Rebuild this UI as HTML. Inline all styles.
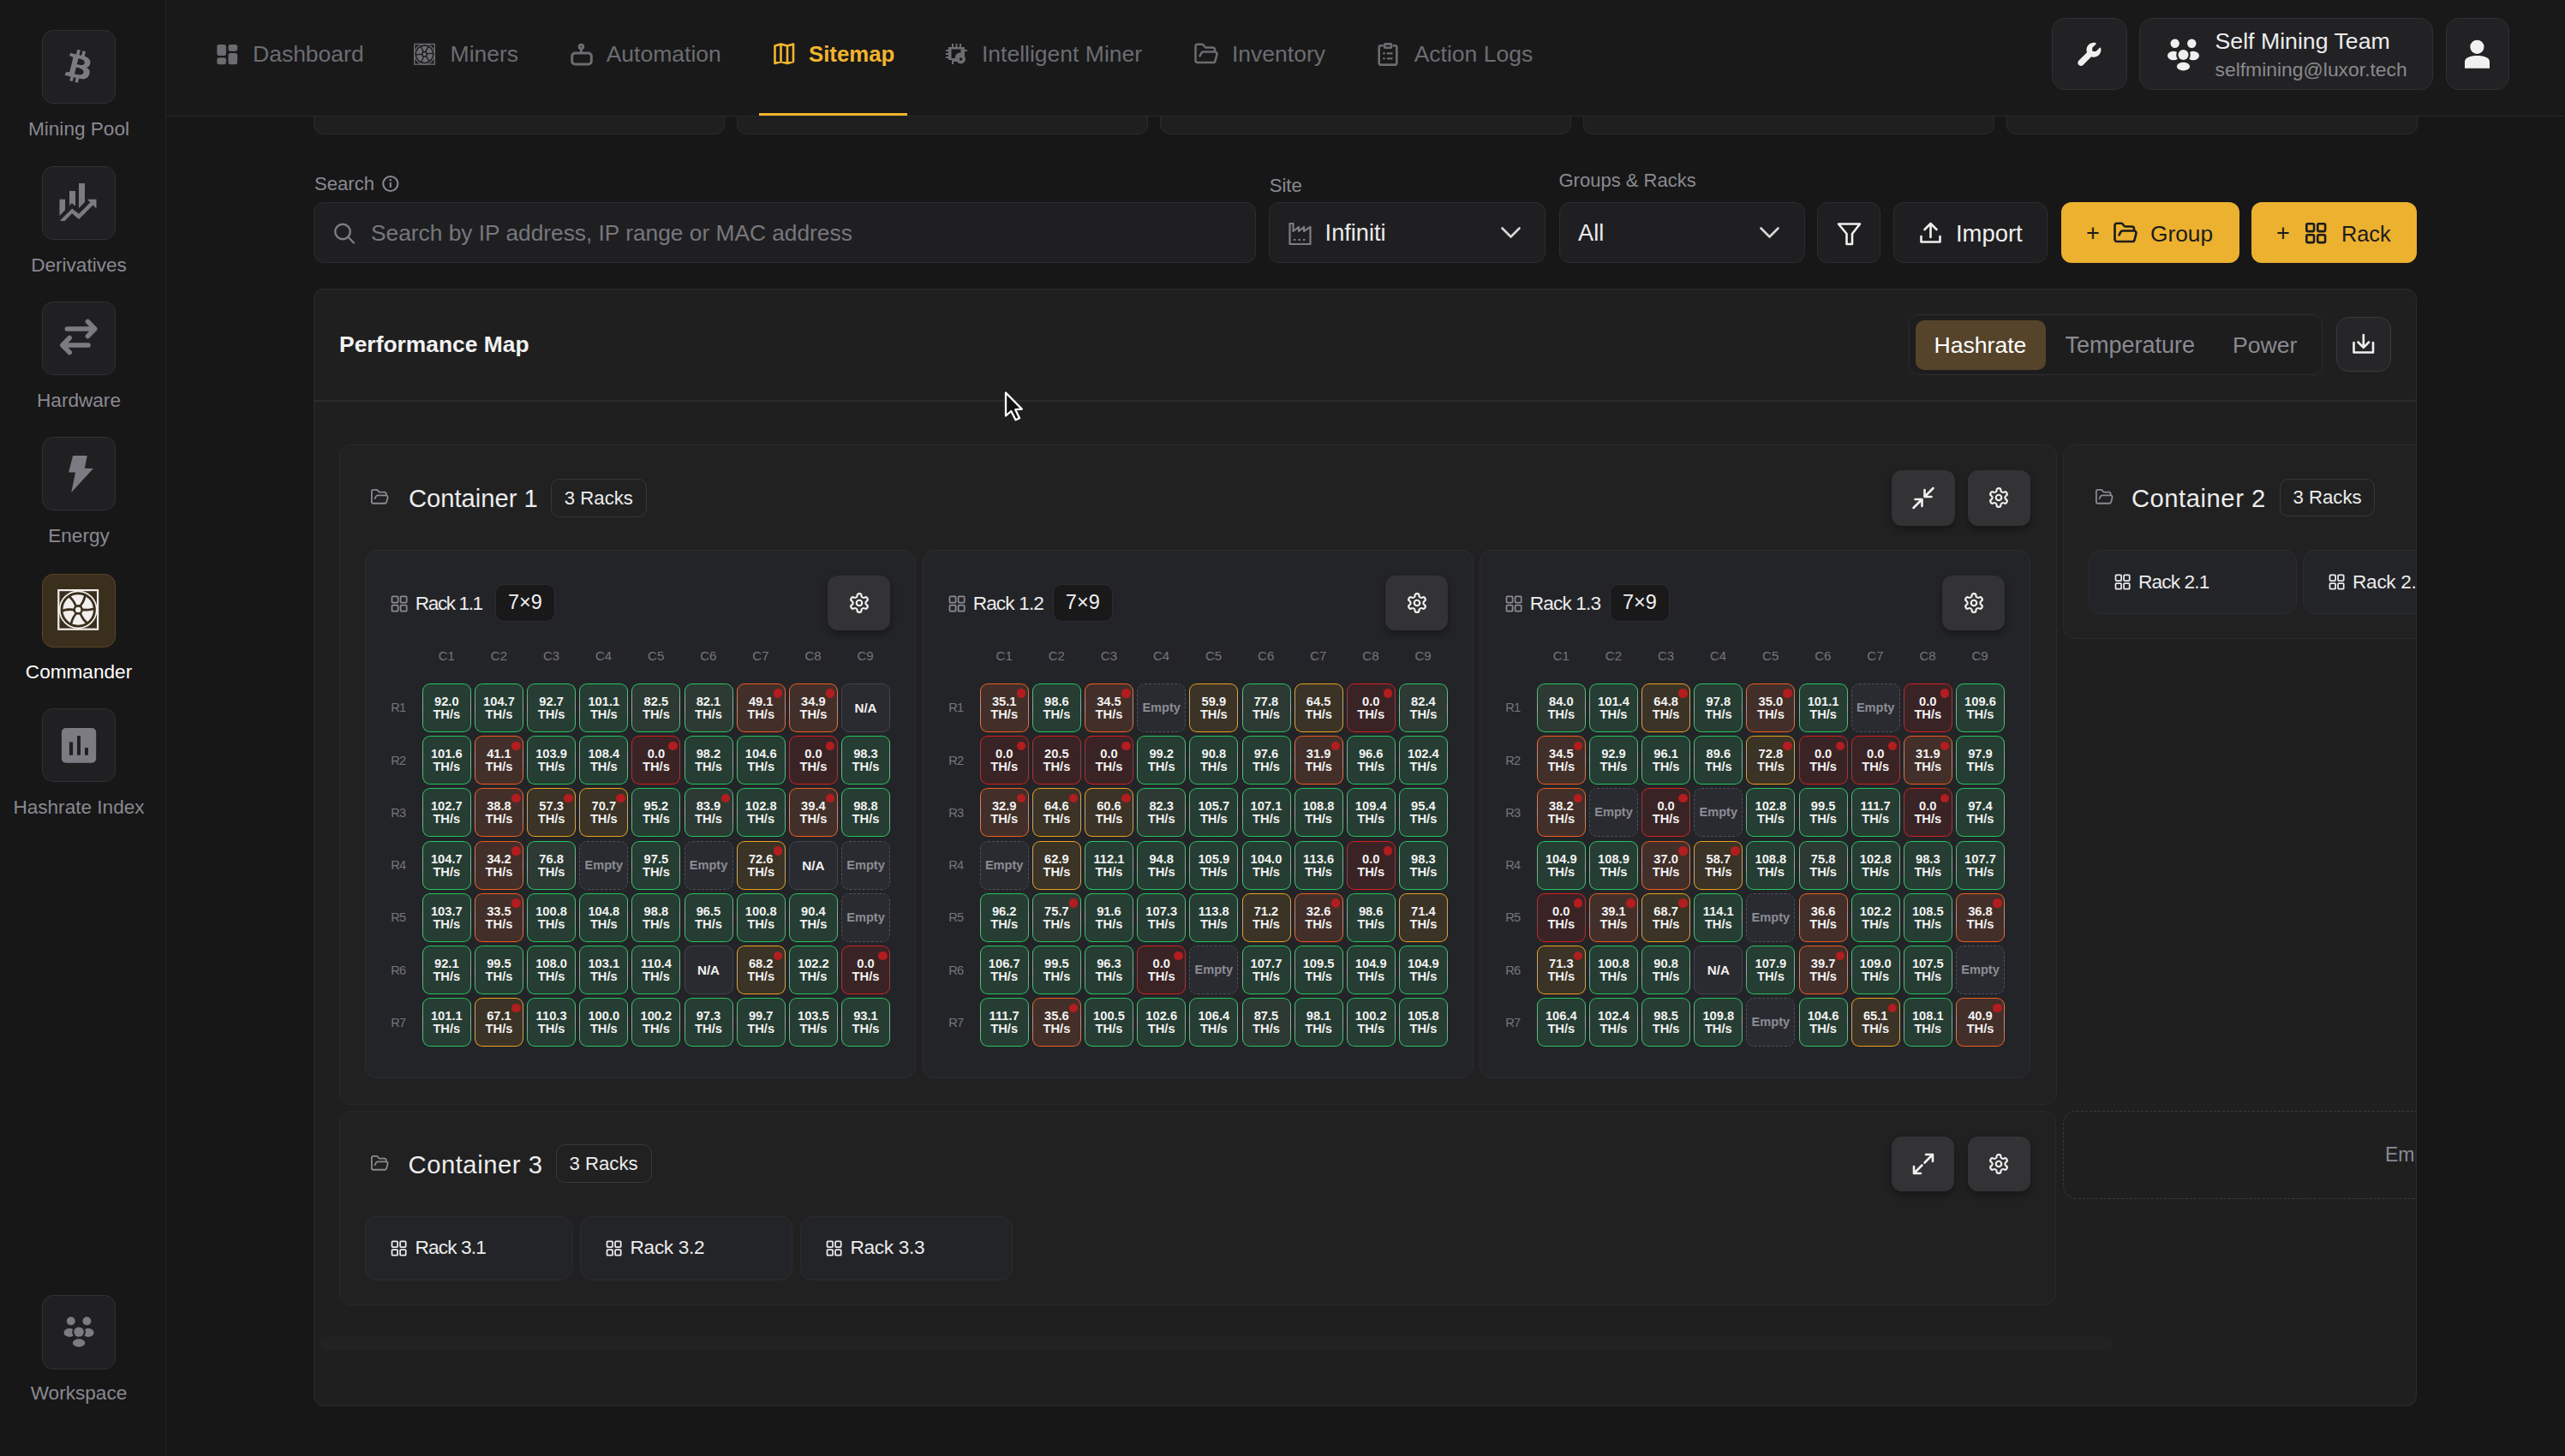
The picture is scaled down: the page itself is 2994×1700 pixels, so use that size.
<!DOCTYPE html><html><head><meta charset="utf-8"><style>
*{margin:0;padding:0;box-sizing:border-box}
html,body{width:2994px;height:1700px;overflow:hidden;background:#171718;font-family:"Liberation Sans",sans-serif}
.t{position:absolute;white-space:nowrap}
.b{position:absolute}
.cell{position:absolute;width:57px;height:57px;border-radius:9px;padding-top:1.5px;display:flex;flex-direction:column;align-items:center;justify-content:center;font-weight:700;font-size:14.7px;line-height:15px;color:#f2f2f2;text-align:center}
.cell .d{position:absolute;right:2.5px;top:5.5px;width:10.5px;height:10.5px;border-radius:50%;background:#b31d1f}
.g{background:linear-gradient(#263d33,#263d33) padding-box,linear-gradient(180deg,#22c55e 0%,#9aa89f 50%,#22c55e 100%) border-box;border:1.5px solid transparent}
.g2{background:linear-gradient(#2c3a33,#2c3a33) padding-box,linear-gradient(180deg,#22c55e 0%,#a8aea9 50%,#22c55e 100%) border-box;border:1.5px solid transparent}
.o{background:linear-gradient(#432f29,#432f29) padding-box,linear-gradient(180deg,#f25a1c 0%,#b89588 50%,#f25a1c 100%) border-box;border:1.5px solid transparent}
.r{background:linear-gradient(#3a2325,#3a2325) padding-box,linear-gradient(180deg,#d61f1f 0%,#7a4a4a 50%,#d61f1f 100%) border-box;border:1.5px solid transparent}
.y{background:linear-gradient(#3b3326,#3b3326) padding-box,linear-gradient(180deg,#eca21a 0%,#b8a686 50%,#eca21a 100%) border-box;border:1.5px solid transparent}
.na{background:#2a2b30;border:1.5px solid #43444d}
.em{background:#2a2b30;border:1.5px dashed #50515a;color:#8b8c95 !important}
</style></head><body>

<div class="b" style="left:193.0px;top:0.0px;width:1.0px;height:1700.0px;background:#232325;border-radius:0px;"></div>
<div class="b" style="left:49.0px;top:35.0px;width:86.0px;height:86.0px;background:#202022;border:1.5px solid #313134;border-radius:13px;"></div>
<div class="t" style="left:-108.0px;width:400px;text-align:center;top:139.9px;font-size:22.6px;line-height:22.6px;color:#8a8990;font-weight:400;letter-spacing:0px">Mining Pool</div>
<div class="b" style="left:49.0px;top:194.3px;width:86.0px;height:86.0px;background:#202022;border:1.5px solid #313134;border-radius:13px;"></div>
<div class="t" style="left:-108.0px;width:400px;text-align:center;top:299.2px;font-size:22.6px;line-height:22.6px;color:#8a8990;font-weight:400;letter-spacing:0px">Derivatives</div>
<div class="b" style="left:49.0px;top:352.3px;width:86.0px;height:86.0px;background:#202022;border:1.5px solid #313134;border-radius:13px;"></div>
<div class="t" style="left:-108.0px;width:400px;text-align:center;top:457.2px;font-size:22.6px;line-height:22.6px;color:#8a8990;font-weight:400;letter-spacing:0px">Hardware</div>
<div class="b" style="left:49.0px;top:510.3px;width:86.0px;height:86.0px;background:#202022;border:1.5px solid #313134;border-radius:13px;"></div>
<div class="t" style="left:-108.0px;width:400px;text-align:center;top:615.2px;font-size:22.6px;line-height:22.6px;color:#8a8990;font-weight:400;letter-spacing:0px">Energy</div>
<div class="b" style="left:49.0px;top:669.5px;width:86.0px;height:86.0px;background:#3a2f1d;border:1.5px solid #5a4622;border-radius:13px;"></div>
<div class="t" style="left:-108.0px;width:400px;text-align:center;top:774.4px;font-size:22.6px;line-height:22.6px;color:#ffffff;font-weight:400;letter-spacing:0px">Commander</div>
<div class="b" style="left:49.0px;top:827.4px;width:86.0px;height:86.0px;background:#202022;border:1.5px solid #313134;border-radius:13px;"></div>
<div class="t" style="left:-108.0px;width:400px;text-align:center;top:932.3px;font-size:22.6px;line-height:22.6px;color:#8a8990;font-weight:400;letter-spacing:0px">Hashrate Index</div>
<div class="b" style="left:49.0px;top:1512.0px;width:86.0px;height:87.0px;background:#202022;border:1.5px solid #313134;border-radius:13px;"></div>
<div class="t" style="left:-108.0px;width:400px;text-align:center;top:1615.9px;font-size:22.6px;line-height:22.6px;color:#8a8990;font-weight:400;letter-spacing:0px">Workspace</div>
<svg class="b" style="left:66.0px;top:52.0px;" width="52.0" height="52.0" viewBox="66 52 52 52"><g transform="translate(92.3,77.6) rotate(14) scale(0.0735) translate(-192,-256)" fill="#7c7b82"><path d="M310.204 242.638c27.73-14.18 45.377-39.39 41.28-81.3-5.358-57.351-52.458-76.573-114.85-81.929V0h-48.528v77.203c-12.605 0-25.525.315-38.444.63V0h-48.528v79.409c-17.842.539-38.622.276-97.37 0v51.678c38.314-.678 58.417-3.14 63.023 21.427v217.429c-2.925 19.492-18.524 16.685-53.255 16.071L3.765 443.68c88.481 0 97.37.315 97.37.315V512h48.528v-67.06c13.234.315 26.154.315 38.444.315V512h48.528v-68.005c81.299-4.412 135.647-24.894 142.895-101.489 5.671-61.446-23.32-88.862-69.326-99.868zM150.608 134.553c27.415 0 113.126-8.507 113.126 48.528 0 54.515-85.71 48.212-113.126 48.212v-96.74zm0 251.776V279.821c32.772 0 133.127-9.138 133.127 53.255-.001 60.186-100.355 53.253-133.127 53.253z"/></g></svg>
<svg class="b" style="left:66.0px;top:208.0px;" width="50.0" height="54.0" viewBox="66 208 50 54"><rect x="69.5" y="232.7" width="6.5" height="26" fill="#7c7b82"/>
<rect x="81" y="223" width="7" height="24" fill="#7c7b82"/>
<rect x="92" y="214" width="7" height="36" fill="#7c7b82"/>
<polyline points="62,263.5 84.1,240.9 92,247.1 110,229.1" fill="none" stroke="#202022" stroke-width="5.6"/>
<rect x="66" y="257.8" width="20" height="5" fill="#202022"/>
<polygon points="69.8,257.8 84.1,243.5 92,249.7 105.4,236.3 101.75,232.7 112.5,232.7 112.5,243.5 108.5,239.4 92,255.9 84.1,249.2 75.7,257.8" fill="#7c7b82"/></svg>
<svg class="b" style="left:64.0px;top:366.0px;" width="56.0" height="54.0" viewBox="64 366 56 54"><g fill="none" stroke="#7c7b82" stroke-width="5.5" stroke-linecap="round" stroke-linejoin="round">
<path d="M78.3,384 H110.5 M102.4,375.5 L110.8,384 L102.4,392.5"/>
<path d="M103,403 H73 M81.2,394.5 L72.8,403 L81.2,411.5"/></g></svg>
<svg class="b" style="left:76.0px;top:528.0px;" width="38.0" height="52.0" viewBox="76 528 38 52"><polygon points="85.1,532 101.75,532 98.8,546.7 108.9,547 83.2,575.1 88,551.6 80.2,551.6" fill="#7c7b82"/></svg>
<svg class="b" style="left:65.0px;top:686.0px;" width="53.0" height="52.0" viewBox="65 686 53 52"><rect x="67.2" y="688" width="48" height="47.8" fill="#f2efec"/>
<rect x="69.4" y="690.2" width="43.6" height="43.4" fill="#3a2f1d"/>
<circle cx="91.2" cy="711.9" r="22.4" fill="#f2efec"/>
<circle cx="91.2" cy="711.9" r="19.2" fill="#f2efec" stroke="#3a2f1d" stroke-width="2.9"/>
<path transform="rotate(0 91.2 711.9)" d="M91.2,711.9 C89.5,705 86.5,699 80.5,694.5 L78.6,696.5 C84,700.5 87.3,706 88.6,712.6 Z" fill="#3a2f1d"/><path transform="rotate(60 91.2 711.9)" d="M91.2,711.9 C89.5,705 86.5,699 80.5,694.5 L78.6,696.5 C84,700.5 87.3,706 88.6,712.6 Z" fill="#3a2f1d"/><path transform="rotate(120 91.2 711.9)" d="M91.2,711.9 C89.5,705 86.5,699 80.5,694.5 L78.6,696.5 C84,700.5 87.3,706 88.6,712.6 Z" fill="#3a2f1d"/><path transform="rotate(180 91.2 711.9)" d="M91.2,711.9 C89.5,705 86.5,699 80.5,694.5 L78.6,696.5 C84,700.5 87.3,706 88.6,712.6 Z" fill="#3a2f1d"/><path transform="rotate(240 91.2 711.9)" d="M91.2,711.9 C89.5,705 86.5,699 80.5,694.5 L78.6,696.5 C84,700.5 87.3,706 88.6,712.6 Z" fill="#3a2f1d"/><path transform="rotate(300 91.2 711.9)" d="M91.2,711.9 C89.5,705 86.5,699 80.5,694.5 L78.6,696.5 C84,700.5 87.3,706 88.6,712.6 Z" fill="#3a2f1d"/>
<circle cx="91.2" cy="711.9" r="5.8" fill="#3a2f1d"/><circle cx="91.2" cy="711.9" r="3.2" fill="#f2efec"/></svg>
<svg class="b" style="left:70.0px;top:848.0px;" width="45.0" height="46.0" viewBox="70 848 45 46"><rect x="71.9" y="850" width="40.3" height="40.8" rx="5" fill="#7c7b82"/>
<rect x="80.9" y="866.4" width="4.2" height="15.3" fill="#202022"/>
<rect x="90" y="859" width="4" height="22.7" fill="#202022"/>
<rect x="99" y="873" width="4" height="8.7" fill="#202022"/></svg>
<svg class="b" style="left:70.0px;top:1532.0px;" width="46.0" height="46.0" viewBox="0 0 46 46"><g transform="translate(4.5,5) scale(0.95)">
<circle cx="8.7" cy="5.7" r="5.2" fill="#7c7b82"/><circle cx="28.3" cy="5.7" r="5.2" fill="#7c7b82"/>
<ellipse cx="7" cy="20" rx="7" ry="5.2" fill="#7c7b82"/><ellipse cx="30" cy="20" rx="7" ry="5.2" fill="#7c7b82"/>
<circle cx="18.5" cy="19.1" r="8.3" fill="#202022"/>
<circle cx="18.5" cy="19.1" r="6" fill="#7c7b82"/>
<ellipse cx="18.5" cy="32.6" rx="7.6" ry="4.9" fill="#7c7b82"/>
</g></svg>
<div class="b" style="left:366.0px;top:60.0px;width:479.5px;height:96.5px;background:#1f1f20;border:1.5px solid #2b2b2d;border-radius:11px;"></div>
<div class="b" style="left:860.0px;top:60.0px;width:479.5px;height:96.5px;background:#1f1f20;border:1.5px solid #2b2b2d;border-radius:11px;"></div>
<div class="b" style="left:1354.0px;top:60.0px;width:479.5px;height:96.5px;background:#1f1f20;border:1.5px solid #2b2b2d;border-radius:11px;"></div>
<div class="b" style="left:1848.0px;top:60.0px;width:479.5px;height:96.5px;background:#1f1f20;border:1.5px solid #2b2b2d;border-radius:11px;"></div>
<div class="b" style="left:2342.0px;top:60.0px;width:479.5px;height:96.5px;background:#1f1f20;border:1.5px solid #2b2b2d;border-radius:11px;"></div>
<div class="b" style="left:194.0px;top:0.0px;width:2800.0px;height:135.0px;background:#19191a;border-radius:0px;"></div>
<div class="b" style="left:194.0px;top:135.0px;width:2800.0px;height:1.0px;background:#29292b;border-radius:0px;"></div>
<div class="t" style="left:295.0px;top:50.3px;font-size:26.5px;line-height:26.5px;color:#6c6c71;font-weight:400;letter-spacing:0px;">Dashboard</div>
<div class="t" style="left:525.6px;top:50.3px;font-size:26.5px;line-height:26.5px;color:#6c6c71;font-weight:400;letter-spacing:0px;">Miners</div>
<div class="t" style="left:707.7px;top:50.3px;font-size:26.5px;line-height:26.5px;color:#6c6c71;font-weight:400;letter-spacing:0px;">Automation</div>
<div class="t" style="left:944.0px;top:50.7px;font-size:25.8px;line-height:25.8px;color:#f2b52e;font-weight:700;letter-spacing:0px;">Sitemap</div>
<div class="t" style="left:1146.0px;top:50.3px;font-size:26.5px;line-height:26.5px;color:#6c6c71;font-weight:400;letter-spacing:0px;">Intelligent Miner</div>
<div class="t" style="left:1438.0px;top:50.3px;font-size:26.5px;line-height:26.5px;color:#6c6c71;font-weight:400;letter-spacing:0px;">Inventory</div>
<div class="t" style="left:1650.7px;top:50.3px;font-size:26.5px;line-height:26.5px;color:#6c6c71;font-weight:400;letter-spacing:0px;">Action Logs</div>
<svg class="b" style="left:252.0px;top:51.0px;" width="28.0" height="26.0" viewBox="252 51 28 26"><g fill="#6c6c71"><rect x="253.3" y="51.9" width="10.6" height="13.2" rx="2.4"/><rect x="266.5" y="51.9" width="10.6" height="7.9" rx="2.4"/>
<rect x="253.3" y="67.2" width="10.6" height="8.1" rx="2.4"/><rect x="266.5" y="62.1" width="10.6" height="13.2" rx="2.4"/></g></svg>
<svg class="b" style="left:481.0px;top:49.0px;" width="30.0" height="29.0" viewBox="481 49 30 29"><rect x="483" y="50.8" width="25" height="25" fill="#6c6c71"/>
<rect x="484.4" y="52.2" width="22.2" height="22.2" fill="#19191a"/>
<circle cx="495.5" cy="63.3" r="12.3" fill="#6c6c71"/>
<circle cx="495.5" cy="63.3" r="10.3" fill="#6c6c71" stroke="#19191a" stroke-width="1.4"/>
<g fill="none" stroke="#19191a" stroke-width="1.3"><path d="M495.5,63.3 C494,60 492.5,57 491,53.5"/><path d="M495.5,63.3 C497,60 498,57 500.5,54"/><path d="M495.5,63.3 C499,62.5 502,62 505.5,62.5"/><path d="M495.5,63.3 C498,66 500,69 501,72"/><path d="M495.5,63.3 C494,67 493,70 491.5,73"/><path d="M495.5,63.3 C492,63.5 489,63.5 485.5,64"/></g>
<circle cx="495.5" cy="63.3" r="2.8" fill="#6c6c71" stroke="#19191a" stroke-width="1.3"/></svg>
<svg class="b" style="left:664.0px;top:49.0px;" width="30.0" height="29.0" viewBox="664 49 30 29"><g fill="none" stroke="#6c6c71" stroke-width="3"><rect x="667.7" y="62" width="22.6" height="13" rx="3.5"/><line x1="678.4" y1="57" x2="678.4" y2="62"/><circle cx="678.4" cy="54.5" r="2.3"/></g></svg>
<svg class="b" style="left:901.0px;top:49.0px;" width="30.0" height="29.0" viewBox="901 49 30 29"><path d="M904.5,53.5 L911.5,51.5 L919,53.5 L926,51.5 V72 L919,74 L911.5,72 L904.5,74 Z M911.5,51.5 V72 M919,53.5 V74" fill="none" stroke="#f2b52e" stroke-width="2.6" stroke-linejoin="round"/></svg>
<svg class="b" style="left:1102.0px;top:49.0px;" width="30.0" height="29.0" viewBox="1102 49 30 29"><g fill="#6c6c71">
<path fill-rule="evenodd" d="M1107,55 H1126 V66 H1123 V72 H1111 V70 H1107 Z M1110.5,57.5 V68 H1115 V67 C1115,63.5 1118,61 1121.5,61.5 V57.5 Z"/>
<rect x="1111" y="51" width="2" height="4"/><rect x="1115.5" y="51" width="2" height="4"/><rect x="1120" y="51" width="2" height="4"/>
<rect x="1104" y="58" width="3" height="2"/><rect x="1104" y="62" width="3" height="2"/><rect x="1104" y="66" width="3" height="2"/>
<rect x="1111" y="72" width="2" height="3"/><rect x="1126" y="58" width="3" height="2"/>
<circle cx="1121.6" cy="69" r="5.4"/>
</g><circle cx="1121.6" cy="69" r="1.8" fill="#19191a"/></svg>
<svg class="b" style="left:1393px;top:47.5px" width="30" height="30" viewBox="0 0 24 24"><path d="m6 14 1.5-2.9A2 2 0 0 1 9.24 10H20a2 2 0 0 1 1.94 2.5l-1.54 6a2 2 0 0 1-1.95 1.5H4a2 2 0 0 1-2-2V5a2 2 0 0 1 2-2h3.9a2 2 0 0 1 1.69.9l.81 1.2a2 2 0 0 0 1.67.9H18a2 2 0 0 1 2 2v2" fill="none" stroke="#6c6c71" stroke-width="2" stroke-linecap="round" stroke-linejoin="round"/></svg>
<svg class="b" style="left:1607.0px;top:49.0px;" width="28.0" height="30.0" viewBox="1607 49 28 30"><g fill="none" stroke="#6c6c71" stroke-width="2.6" stroke-linejoin="round"><path d="M1614.5,53.3 H1611.5 C1610.5,53.3 1609.7,54.1 1609.7,55.1 V73.8 C1609.7,74.8 1610.5,75.6 1611.5,75.6 H1628.5 C1629.5,75.6 1630.3,74.8 1630.3,73.8 V55.1 C1630.3,54.1 1629.5,53.3 1628.5,53.3 H1625.5"/><rect x="1616" y="51.4" width="8" height="4.3" rx="1"/></g>
<g fill="#6c6c71"><circle cx="1615.5" cy="62.3" r="1.3"/><circle cx="1615.5" cy="68.3" r="1.3"/><rect x="1618.7" y="61.2" width="7" height="2.2" rx="1"/><rect x="1618.7" y="67.2" width="7" height="2.2" rx="1"/></g></svg>
<div class="b" style="left:886.0px;top:132.0px;width:172.6px;height:3.0px;background:#f2b52e;border-radius:0px;"></div>
<div class="b" style="left:2395.0px;top:21.0px;width:88.0px;height:84.0px;background:#222224;border:1.5px solid #303033;border-radius:15px;"></div>
<div class="b" style="left:2497.0px;top:21.0px;width:343.0px;height:84.0px;background:#222224;border:1.5px solid #303033;border-radius:15px;"></div>
<div class="b" style="left:2855.0px;top:21.0px;width:74.0px;height:84.0px;background:#222224;border:1.5px solid #303033;border-radius:15px;"></div>
<svg class="b" style="left:2420.0px;top:46.0px;" width="36.0" height="36.0" viewBox="2420 46 36 36"><g transform="translate(2425.3,49.8) scale(0.053)" fill="#f0f0f0"><path d="M352 320c88.4 0 160-71.6 160-160c0-15.3-2.2-30.1-6.2-44.2c-3.1-10.8-16.4-13.2-24.3-5.3l-76.8 76.8c-3 3-7.1 4.7-11.3 4.7H336c-8.8 0-16-7.2-16-16V118.6c0-4.2 1.7-8.3 4.7-11.3l76.8-76.8c7.9-7.9 5.4-21.2-5.3-24.3C382.1 2.2 367.3 0 352 0C263.6 0 192 71.6 192 160c0 19.1 3.4 37.5 9.5 54.5L19.9 396.1C7.2 408.8 0 426.1 0 444.1C0 481.6 30.4 512 67.9 512c18 0 35.3-7.2 48-19.9L297.5 310.5c17 6.2 35.4 9.5 54.5 9.5z"/></g></svg>
<svg class="b" style="left:2528.0px;top:43.0px;" width="40.0" height="42.0" viewBox="0 0 40 42"><g transform="translate(2,2) scale(1.0)">
<circle cx="8.7" cy="5.7" r="5.2" fill="#f0f0f0"/><circle cx="28.3" cy="5.7" r="5.2" fill="#f0f0f0"/>
<ellipse cx="7" cy="20" rx="7" ry="5.2" fill="#f0f0f0"/><ellipse cx="30" cy="20" rx="7" ry="5.2" fill="#f0f0f0"/>
<circle cx="18.5" cy="19.1" r="8.3" fill="#222224"/>
<circle cx="18.5" cy="19.1" r="6" fill="#f0f0f0"/>
<ellipse cx="18.5" cy="32.6" rx="7.6" ry="4.9" fill="#f0f0f0"/>
</g></svg>
<div class="t" style="left:2585.5px;top:34.8px;font-size:26.7px;line-height:26.7px;color:#ececec;font-weight:400;letter-spacing:0px;">Self Mining Team</div>
<div class="t" style="left:2585.5px;top:70.3px;font-size:22.9px;line-height:22.9px;color:#8a8a8e;font-weight:400;letter-spacing:0px;">selfmining@luxor.tech</div>
<svg class="b" style="left:2874.0px;top:44.0px;" width="36.0" height="38.0" viewBox="2874 44 36 38"><circle cx="2891.4" cy="54.8" r="8.1" fill="#f0f0f0"/><path d="M2877,79.7 V72 C2877,67.8 2883,65.1 2891.5,65.1 C2900,65.1 2906,67.8 2906,72 V79.7 Z" fill="#f0f0f0"/></svg>
<div class="t" style="left:367.0px;top:204.3px;font-size:22.1px;line-height:22.1px;color:#8a8a90;font-weight:400;letter-spacing:0px;">Search</div>
<svg class="b" style="left:444.0px;top:203.0px;" width="24.0" height="24.0" viewBox="444 203 24 24"><circle cx="455.8" cy="214.5" r="8.6" fill="none" stroke="#8a8a90" stroke-width="2"/><rect x="454.8" y="213" width="2" height="6" fill="#8a8a90"/><circle cx="455.8" cy="210.2" r="1.2" fill="#8a8a90"/></svg>
<div class="b" style="left:366.0px;top:236.0px;width:1099.5px;height:71.0px;background:#1f1f21;border:1.5px solid #2d2d30;border-radius:12px;"></div>
<svg class="b" style="left:386.0px;top:257.0px;" width="32.0" height="32.0" viewBox="386 257 32 32"><circle cx="400" cy="270.5" r="8.8" fill="none" stroke="#7c7c82" stroke-width="2.4"/><line x1="406.5" y1="277" x2="413" y2="283.5" stroke="#7c7c82" stroke-width="2.4" stroke-linecap="round"/></svg>
<div class="t" style="left:433.0px;top:259.3px;font-size:26.3px;line-height:26.3px;color:#77777d;font-weight:400;letter-spacing:0px;">Search by IP address, IP range or MAC address</div>
<div class="t" style="left:1481.7px;top:206.3px;font-size:22.1px;line-height:22.1px;color:#8a8a90;font-weight:400;letter-spacing:0px;">Site</div>
<div class="b" style="left:1480.5px;top:236.0px;width:323.5px;height:71.0px;background:#1f1f21;border:1.5px solid #2d2d30;border-radius:12px;"></div>
<svg class="b" style="left:1502.0px;top:257.0px;" width="32.0" height="32.0" viewBox="1502 257 32 32"><path d="M1505.5,285 V261 H1509.5 V270 L1516,265 V270 L1522,265 V270 L1529.5,265 V285 Z" fill="none" stroke="#7c7c82" stroke-width="2.2" stroke-linejoin="round"/><g fill="#7c7c82"><rect x="1510" y="279" width="2.4" height="2"/><rect x="1515.5" y="279" width="2.4" height="2"/><rect x="1521" y="279" width="2.4" height="2"/></g></svg>
<div class="t" style="left:1546.6px;top:258.4px;font-size:27.2px;line-height:27.2px;color:#ebebeb;font-weight:400;letter-spacing:0px;">Infiniti</div>
<svg class="b" style="left:1750.0px;top:262.0px;" width="28.0" height="20.0" viewBox="1750 262 28 20"><polyline points="1753.5,266.5 1763.5,276.5 1773.5,266.5" fill="none" stroke="#d8d8d8" stroke-width="2.6" stroke-linecap="round" stroke-linejoin="round"/></svg>
<div class="t" style="left:1819.5px;top:199.8px;font-size:22px;line-height:22px;color:#8a8a90;font-weight:400;letter-spacing:0px;">Groups &amp; Racks</div>
<div class="b" style="left:1819.5px;top:236.0px;width:287.0px;height:71.0px;background:#1f1f21;border:1.5px solid #2d2d30;border-radius:12px;"></div>
<div class="t" style="left:1842.0px;top:258.4px;font-size:27.2px;line-height:27.2px;color:#ebebeb;font-weight:400;letter-spacing:0px;">All</div>
<svg class="b" style="left:2052.0px;top:262.0px;" width="28.0" height="20.0" viewBox="2052 262 28 20"><polyline points="2055.5,266.5 2065.5,276.5 2075.5,266.5" fill="none" stroke="#d8d8d8" stroke-width="2.6" stroke-linecap="round" stroke-linejoin="round"/></svg>
<div class="b" style="left:2121.0px;top:236.0px;width:73.7px;height:71.0px;background:#1f1f21;border:1.5px solid #2d2d30;border-radius:12px;"></div>
<svg class="b" style="left:2141.0px;top:256.0px;" width="36.0" height="34.0" viewBox="2141 256 36 34"><path d="M2146,261.5 H2171 L2162,273 V285 L2155.5,285 V273 Z" fill="none" stroke="#f0f0f0" stroke-width="2.6" stroke-linejoin="round"/></svg>
<div class="b" style="left:2210.0px;top:236.0px;width:180.4px;height:71.0px;background:#1f1f21;border:1.5px solid #2d2d30;border-radius:12px;"></div>
<svg class="b" style="left:2238.0px;top:256.0px;" width="32.0" height="32.0" viewBox="2238 256 32 32"><g fill="none" stroke="#f0f0f0" stroke-width="2.6" stroke-linecap="round" stroke-linejoin="round"><path d="M2242.5,276 V282.5 H2264.5 V276"/><path d="M2253.5,277 V261.5 M2246.5,268 L2253.5,261 L2260.5,268"/></g></svg>
<div class="t" style="left:2283.0px;top:258.8px;font-size:27.4px;line-height:27.4px;color:#f0f0f0;font-weight:400;letter-spacing:0px;">Import</div>
<div class="b" style="left:2406.0px;top:236.0px;width:207.8px;height:71.0px;background:#ecb12f;border-radius:12px;"></div>
<div class="t" style="left:2435.0px;top:259.1px;font-size:27px;line-height:27px;color:#1c1c1c;font-weight:400;letter-spacing:0px;">+</div>
<svg class="b" style="left:2466px;top:256.5px" width="30" height="30" viewBox="0 0 24 24"><path d="m6 14 1.5-2.9A2 2 0 0 1 9.24 10H20a2 2 0 0 1 1.94 2.5l-1.54 6a2 2 0 0 1-1.95 1.5H4a2 2 0 0 1-2-2V5a2 2 0 0 1 2-2h3.9a2 2 0 0 1 1.69.9l.81 1.2a2 2 0 0 0 1.67.9H18a2 2 0 0 1 2 2v2" fill="none" stroke="#1c1c1c" stroke-width="2.1" stroke-linecap="round" stroke-linejoin="round"/></svg>
<div class="t" style="left:2510.0px;top:259.7px;font-size:26.3px;line-height:26.3px;color:#1c1c1c;font-weight:400;letter-spacing:0px;">Group</div>
<div class="b" style="left:2628.0px;top:236.0px;width:193.0px;height:71.0px;background:#ecb12f;border-radius:12px;"></div>
<div class="t" style="left:2657.0px;top:259.1px;font-size:27px;line-height:27px;color:#1c1c1c;font-weight:400;letter-spacing:0px;">+</div>
<svg class="b" style="left:2688.0px;top:257.0px;" width="30.0" height="30.0" viewBox="2688 257 30 30"><g fill="none" stroke="#1c1c1c" stroke-width="2.6"><rect x="2692.3" y="261.3" width="8.8" height="8.8" rx="1.5"/><rect x="2705.3" y="261.3" width="8.8" height="8.8" rx="1.5"/><rect x="2692.3" y="274.3" width="8.8" height="8.8" rx="1.5"/><rect x="2705.3" y="274.3" width="8.8" height="8.8" rx="1.5"/></g></svg>
<div class="t" style="left:2733.0px;top:260.6px;font-size:25.3px;line-height:25.3px;color:#1c1c1c;font-weight:400;letter-spacing:0px;">Rack</div>
<div class="b" style="left:366px;top:337px;width:2455px;height:1305px;background:#1f1f20;border:1.5px solid #2c2c2e;border-radius:12px;overflow:hidden">
<div class="b" style="left:-367.5px;top:-338.5px;width:2994px;height:1700px">
<div class="t" style="left:396.6px;top:389.7px;font-size:26.4px;line-height:26.4px;color:#f2f2f2;font-weight:700;letter-spacing:0px;">Performance Map</div>
<div class="b" style="left:2228.0px;top:367.0px;width:483.6px;height:71.6px;background:#1d1d1e;border:1.5px solid #2f2f31;border-radius:12px;"></div>
<div class="b" style="left:2236.0px;top:374.0px;width:152.0px;height:58.0px;background:#55442a;border-radius:10px;"></div>
<div class="t" style="left:2258.0px;top:390.7px;font-size:26.6px;line-height:26.6px;color:#ffffff;font-weight:400;letter-spacing:0px;">Hashrate</div>
<div class="t" style="left:2411.0px;top:390.3px;font-size:27px;line-height:27px;color:#8a8a90;font-weight:400;letter-spacing:0px;">Temperature</div>
<div class="t" style="left:2606.6px;top:390.7px;font-size:26.6px;line-height:26.6px;color:#8a8a90;font-weight:400;letter-spacing:0px;">Power</div>
<div class="b" style="left:2727.0px;top:370.0px;width:64.0px;height:64.7px;background:#262628;border:1.5px solid #3a3a3c;border-radius:14px;"></div>
<svg class="b" style="left:2743.0px;top:386.0px;" width="32.0" height="32.0" viewBox="2743 386 32 32"><g fill="none" stroke="#f0f0f0" stroke-width="2.6" stroke-linecap="round" stroke-linejoin="round"><path d="M2747.5,400 V411.5 H2770 V400"/><path d="M2758.8,391 V405.5 M2752.5,399.5 L2758.8,405.8 L2765,399.5"/></g></svg>
<div class="b" style="left:366.0px;top:467.5px;width:2455.0px;height:1.5px;background:#2c2c2e;border-radius:0px;"></div>
<div class="b" style="left:396.0px;top:519.0px;width:2005.3px;height:771.0px;background:#212122;border:1.5px solid #2a2a2c;border-radius:14px;"></div>
<svg class="b" style="left:432.3px;top:569.8px" width="22.5" height="22.5" viewBox="0 0 24 24"><path d="m6 14 1.5-2.9A2 2 0 0 1 9.24 10H20a2 2 0 0 1 1.94 2.5l-1.54 6a2 2 0 0 1-1.95 1.5H4a2 2 0 0 1-2-2V5a2 2 0 0 1 2-2h3.9a2 2 0 0 1 1.69.9l.81 1.2a2 2 0 0 0 1.67.9H18a2 2 0 0 1 2 2v2" fill="none" stroke="#8a8a90" stroke-width="1.9" stroke-linecap="round" stroke-linejoin="round"/></svg>
<div class="t" style="left:477.4px;top:568.6px;font-size:29.2px;line-height:29.2px;color:#ececec;font-weight:400;letter-spacing:0px;">Container 1</div>
<div class="b" style="left:643.3px;top:559.5px;width:112.3px;height:44.5px;background:transparent;border:1.5px solid #38383b;border-radius:10px;"></div>
<div class="t" style="left:659.3px;top:571.2px;font-size:22.2px;line-height:22.2px;color:#ececec;font-weight:400;letter-spacing:0px;">3 Racks</div>
<div class="b" style="left:2208.0px;top:549.0px;width:74.0px;height:65.0px;background:#333335;border-radius:12px;box-shadow:0 4px 10px rgba(0,0,0,0.35)"></div>
<svg class="b" style="left:2232.0px;top:568.5px" width="26" height="26" viewBox="0 0 24 24"><g fill="none" stroke="#f0f0f0" stroke-width="2" stroke-linecap="round" stroke-linejoin="round"><path d="M12.22 2h-.44a2 2 0 0 0-2 2v.18a2 2 0 0 1-1 1.73l-.43.25a2 2 0 0 1-2 0l-.15-.08a2 2 0 0 0-2.73.73l-.22.38a2 2 0 0 0 .73 2.73l.15.1a2 2 0 0 1 1 1.72v.51a2 2 0 0 1-1 1.74l-.15.09a2 2 0 0 0-.73 2.73l.22.38a2 2 0 0 0 2.73.73l.15-.08a2 2 0 0 1 2 0l.43.25a2 2 0 0 1 1 1.73V20a2 2 0 0 0 2 2h.44a2 2 0 0 0 2-2v-.18a2 2 0 0 1 1-1.73l.43-.25a2 2 0 0 1 2 0l.15.08a2 2 0 0 0 2.73-.73l.22-.39a2 2 0 0 0-.73-2.73l-.15-.08a2 2 0 0 1-1-1.74v-.5a2 2 0 0 1 1-1.74l.15-.09a2 2 0 0 0 .73-2.73l-.22-.38a2 2 0 0 0-2.73-.73l-.15.08a2 2 0 0 1-2 0l-.43-.25a2 2 0 0 1-1-1.73V4a2 2 0 0 0-2-2z"/><circle cx="12" cy="12" r="3"/></g></svg>
<svg class="b" style="left:2228.0px;top:565.0px;" width="34.0" height="34.0" viewBox="2228 565 34 34"><g fill="none" stroke="#f0f0f0" stroke-width="2.6" stroke-linecap="round" stroke-linejoin="round"><path d="M2233.5,593 L2243,583.5 M2235.5,583 H2243.5 V591"/><path d="M2256.5,570 L2247,579.5 M2254.5,580 H2246.5 V572"/></g></svg>
<div class="b" style="left:2220.0px;top:560.0px;width:50.0px;height:44.0px;background:#333335;border-radius:0px;"></div>
<svg class="b" style="left:2228.0px;top:565.0px;" width="34.0" height="34.0" viewBox="2228 565 34 34"><g fill="none" stroke="#f0f0f0" stroke-width="2.6" stroke-linecap="round" stroke-linejoin="round"><path d="M2233.5,593 L2243,583.5 M2235.5,583 H2243.5 V591"/><path d="M2256.5,570 L2247,579.5 M2254.5,580 H2246.5 V572"/></g></svg>
<div class="b" style="left:2297.0px;top:549.0px;width:73.5px;height:65.0px;background:#333335;border-radius:12px;box-shadow:0 4px 10px rgba(0,0,0,0.35)"></div>
<svg class="b" style="left:2320.8px;top:568.5px" width="26" height="26" viewBox="0 0 24 24"><g fill="none" stroke="#f0f0f0" stroke-width="2" stroke-linecap="round" stroke-linejoin="round"><path d="M12.22 2h-.44a2 2 0 0 0-2 2v.18a2 2 0 0 1-1 1.73l-.43.25a2 2 0 0 1-2 0l-.15-.08a2 2 0 0 0-2.73.73l-.22.38a2 2 0 0 0 .73 2.73l.15.1a2 2 0 0 1 1 1.72v.51a2 2 0 0 1-1 1.74l-.15.09a2 2 0 0 0-.73 2.73l.22.38a2 2 0 0 0 2.73.73l.15-.08a2 2 0 0 1 2 0l.43.25a2 2 0 0 1 1 1.73V20a2 2 0 0 0 2 2h.44a2 2 0 0 0 2-2v-.18a2 2 0 0 1 1-1.73l.43-.25a2 2 0 0 1 2 0l.15.08a2 2 0 0 0 2.73-.73l.22-.39a2 2 0 0 0-.73-2.73l-.15-.08a2 2 0 0 1-1-1.74v-.5a2 2 0 0 1 1-1.74l.15-.09a2 2 0 0 0 .73-2.73l-.22-.38a2 2 0 0 0-2.73-.73l-.15.08a2 2 0 0 1-2 0l-.43-.25a2 2 0 0 1-1-1.73V4a2 2 0 0 0-2-2z"/><circle cx="12" cy="12" r="3"/></g></svg>
<div class="b" style="left:426.3px;top:642.3px;width:643.0px;height:617.7px;background:#232428;border:1.5px solid #2c2d31;border-radius:14px;"></div>
<svg class="b" style="left:456.8px;top:695.0px" width="20.2" height="20.2" viewBox="-1 -1 20.2 20.2"><g fill="none" stroke="#8a8a90" stroke-width="1.75"><rect x="0.5" y="0.5" width="7.10" height="7.10" rx="1"/><rect x="10.60" y="0.5" width="7.10" height="7.10" rx="1"/><rect x="0.5" y="10.60" width="7.10" height="7.10" rx="1"/><rect x="10.60" y="10.60" width="7.10" height="7.10" rx="1"/></g></svg>
<div class="t" style="left:485.3px;top:694.4px;font-size:22.6px;line-height:22.6px;color:#ececec;font-weight:400;letter-spacing:-1.4px;">Rack 1.1</div>
<div class="b" style="left:578.6px;top:682.5px;width:69.7px;height:44.0px;background:#19191a;border:1.5px solid #2e2e31;border-radius:10px;"></div>
<div class="t" style="left:413.4px;width:400px;text-align:center;top:692.6px;font-size:23.5px;line-height:23.5px;color:#f0f0f0;font-weight:400;letter-spacing:0px">7×9</div>
<div class="b" style="left:966.3px;top:672.0px;width:73.5px;height:64.6px;background:#333335;border-radius:12px;box-shadow:0 4px 10px rgba(0,0,0,0.35)"></div>
<svg class="b" style="left:990.0px;top:691.3px" width="26" height="26" viewBox="0 0 24 24"><g fill="none" stroke="#f0f0f0" stroke-width="2" stroke-linecap="round" stroke-linejoin="round"><path d="M12.22 2h-.44a2 2 0 0 0-2 2v.18a2 2 0 0 1-1 1.73l-.43.25a2 2 0 0 1-2 0l-.15-.08a2 2 0 0 0-2.73.73l-.22.38a2 2 0 0 0 .73 2.73l.15.1a2 2 0 0 1 1 1.72v.51a2 2 0 0 1-1 1.74l-.15.09a2 2 0 0 0-.73 2.73l.22.38a2 2 0 0 0 2.73.73l.15-.08a2 2 0 0 1 2 0l.43.25a2 2 0 0 1 1 1.73V20a2 2 0 0 0 2 2h.44a2 2 0 0 0 2-2v-.18a2 2 0 0 1 1-1.73l.43-.25a2 2 0 0 1 2 0l.15.08a2 2 0 0 0 2.73-.73l.22-.39a2 2 0 0 0-.73-2.73l-.15-.08a2 2 0 0 1-1-1.74v-.5a2 2 0 0 1 1-1.74l.15-.09a2 2 0 0 0 .73-2.73l-.22-.38a2 2 0 0 0-2.73-.73l-.15.08a2 2 0 0 1-2 0l-.43-.25a2 2 0 0 1-1-1.73V4a2 2 0 0 0-2-2z"/><circle cx="12" cy="12" r="3"/></g></svg>
<div class="t" style="left:491.8px;width:60px;text-align:center;top:758.3px;font-size:15px;line-height:15px;color:#75757b;font-weight:400;letter-spacing:0px">C1</div>
<div class="t" style="left:552.9px;width:60px;text-align:center;top:758.3px;font-size:15px;line-height:15px;color:#75757b;font-weight:400;letter-spacing:0px">C2</div>
<div class="t" style="left:614.0px;width:60px;text-align:center;top:758.3px;font-size:15px;line-height:15px;color:#75757b;font-weight:400;letter-spacing:0px">C3</div>
<div class="t" style="left:675.1px;width:60px;text-align:center;top:758.3px;font-size:15px;line-height:15px;color:#75757b;font-weight:400;letter-spacing:0px">C4</div>
<div class="t" style="left:736.2px;width:60px;text-align:center;top:758.3px;font-size:15px;line-height:15px;color:#75757b;font-weight:400;letter-spacing:0px">C5</div>
<div class="t" style="left:797.3px;width:60px;text-align:center;top:758.3px;font-size:15px;line-height:15px;color:#75757b;font-weight:400;letter-spacing:0px">C6</div>
<div class="t" style="left:858.4px;width:60px;text-align:center;top:758.3px;font-size:15px;line-height:15px;color:#75757b;font-weight:400;letter-spacing:0px">C7</div>
<div class="t" style="left:919.5px;width:60px;text-align:center;top:758.3px;font-size:15px;line-height:15px;color:#75757b;font-weight:400;letter-spacing:0px">C8</div>
<div class="t" style="left:980.6px;width:60px;text-align:center;top:758.3px;font-size:15px;line-height:15px;color:#75757b;font-weight:400;letter-spacing:0px">C9</div>
<div class="t" style="left:445.3px;width:40px;text-align:center;top:819.9px;font-size:14.6px;line-height:14.6px;color:#75757b;font-weight:400;letter-spacing:-0.8px">R1</div>
<div class="cell g" style="left:493.3px;top:798.2px"><span>92.0</span><span>TH/s</span></div>
<div class="cell g" style="left:554.5px;top:798.2px"><span>104.7</span><span>TH/s</span></div>
<div class="cell g" style="left:615.6px;top:798.2px"><span>92.7</span><span>TH/s</span></div>
<div class="cell g" style="left:676.8px;top:798.2px"><span>101.1</span><span>TH/s</span></div>
<div class="cell g2" style="left:737.9px;top:798.2px"><span>82.5</span><span>TH/s</span></div>
<div class="cell g2" style="left:799.0px;top:798.2px"><span>82.1</span><span>TH/s</span></div>
<div class="cell o" style="left:860.2px;top:798.2px"><span class="d"></span><span>49.1</span><span>TH/s</span></div>
<div class="cell o" style="left:921.4px;top:798.2px"><span class="d"></span><span>34.9</span><span>TH/s</span></div>
<div class="cell na" style="left:982.5px;top:798.2px;font-size:15.2px;padding-top:0px">N/A</div>
<div class="t" style="left:445.3px;width:40px;text-align:center;top:881.2px;font-size:14.6px;line-height:14.6px;color:#75757b;font-weight:400;letter-spacing:-0.8px">R2</div>
<div class="cell g" style="left:493.3px;top:859.5px"><span>101.6</span><span>TH/s</span></div>
<div class="cell o" style="left:554.5px;top:859.5px"><span class="d"></span><span>41.1</span><span>TH/s</span></div>
<div class="cell g" style="left:615.6px;top:859.5px"><span>103.9</span><span>TH/s</span></div>
<div class="cell g" style="left:676.8px;top:859.5px"><span>108.4</span><span>TH/s</span></div>
<div class="cell r" style="left:737.9px;top:859.5px"><span class="d"></span><span>0.0</span><span>TH/s</span></div>
<div class="cell g" style="left:799.0px;top:859.5px"><span>98.2</span><span>TH/s</span></div>
<div class="cell g" style="left:860.2px;top:859.5px"><span>104.6</span><span>TH/s</span></div>
<div class="cell r" style="left:921.4px;top:859.5px"><span class="d"></span><span>0.0</span><span>TH/s</span></div>
<div class="cell g" style="left:982.5px;top:859.5px"><span>98.3</span><span>TH/s</span></div>
<div class="t" style="left:445.3px;width:40px;text-align:center;top:942.4px;font-size:14.6px;line-height:14.6px;color:#75757b;font-weight:400;letter-spacing:-0.8px">R3</div>
<div class="cell g" style="left:493.3px;top:920.7px"><span>102.7</span><span>TH/s</span></div>
<div class="cell o" style="left:554.5px;top:920.7px"><span class="d"></span><span>38.8</span><span>TH/s</span></div>
<div class="cell y" style="left:615.6px;top:920.7px"><span class="d"></span><span>57.3</span><span>TH/s</span></div>
<div class="cell y" style="left:676.8px;top:920.7px"><span class="d"></span><span>70.7</span><span>TH/s</span></div>
<div class="cell g" style="left:737.9px;top:920.7px"><span>95.2</span><span>TH/s</span></div>
<div class="cell g2" style="left:799.0px;top:920.7px"><span class="d"></span><span>83.9</span><span>TH/s</span></div>
<div class="cell g" style="left:860.2px;top:920.7px"><span>102.8</span><span>TH/s</span></div>
<div class="cell o" style="left:921.4px;top:920.7px"><span class="d"></span><span>39.4</span><span>TH/s</span></div>
<div class="cell g" style="left:982.5px;top:920.7px"><span>98.8</span><span>TH/s</span></div>
<div class="t" style="left:445.3px;width:40px;text-align:center;top:1003.7px;font-size:14.6px;line-height:14.6px;color:#75757b;font-weight:400;letter-spacing:-0.8px">R4</div>
<div class="cell g" style="left:493.3px;top:982.0px"><span>104.7</span><span>TH/s</span></div>
<div class="cell o" style="left:554.5px;top:982.0px"><span class="d"></span><span>34.2</span><span>TH/s</span></div>
<div class="cell g2" style="left:615.6px;top:982.0px"><span>76.8</span><span>TH/s</span></div>
<div class="cell em" style="left:676.8px;top:982.0px;font-size:14.6px;padding-top:0px">Empty</div>
<div class="cell g" style="left:737.9px;top:982.0px"><span>97.5</span><span>TH/s</span></div>
<div class="cell em" style="left:799.0px;top:982.0px;font-size:14.6px;padding-top:0px">Empty</div>
<div class="cell y" style="left:860.2px;top:982.0px"><span class="d"></span><span>72.6</span><span>TH/s</span></div>
<div class="cell na" style="left:921.4px;top:982.0px;font-size:15.2px;padding-top:0px">N/A</div>
<div class="cell em" style="left:982.5px;top:982.0px;font-size:14.6px;padding-top:0px">Empty</div>
<div class="t" style="left:445.3px;width:40px;text-align:center;top:1064.9px;font-size:14.6px;line-height:14.6px;color:#75757b;font-weight:400;letter-spacing:-0.8px">R5</div>
<div class="cell g" style="left:493.3px;top:1043.2px"><span>103.7</span><span>TH/s</span></div>
<div class="cell o" style="left:554.5px;top:1043.2px"><span class="d"></span><span>33.5</span><span>TH/s</span></div>
<div class="cell g" style="left:615.6px;top:1043.2px"><span>100.8</span><span>TH/s</span></div>
<div class="cell g" style="left:676.8px;top:1043.2px"><span>104.8</span><span>TH/s</span></div>
<div class="cell g" style="left:737.9px;top:1043.2px"><span>98.8</span><span>TH/s</span></div>
<div class="cell g" style="left:799.0px;top:1043.2px"><span>96.5</span><span>TH/s</span></div>
<div class="cell g" style="left:860.2px;top:1043.2px"><span>100.8</span><span>TH/s</span></div>
<div class="cell g" style="left:921.4px;top:1043.2px"><span>90.4</span><span>TH/s</span></div>
<div class="cell em" style="left:982.5px;top:1043.2px;font-size:14.6px;padding-top:0px">Empty</div>
<div class="t" style="left:445.3px;width:40px;text-align:center;top:1126.2px;font-size:14.6px;line-height:14.6px;color:#75757b;font-weight:400;letter-spacing:-0.8px">R6</div>
<div class="cell g" style="left:493.3px;top:1104.5px"><span>92.1</span><span>TH/s</span></div>
<div class="cell g" style="left:554.5px;top:1104.5px"><span>99.5</span><span>TH/s</span></div>
<div class="cell g" style="left:615.6px;top:1104.5px"><span>108.0</span><span>TH/s</span></div>
<div class="cell g" style="left:676.8px;top:1104.5px"><span>103.1</span><span>TH/s</span></div>
<div class="cell g" style="left:737.9px;top:1104.5px"><span>110.4</span><span>TH/s</span></div>
<div class="cell na" style="left:799.0px;top:1104.5px;font-size:15.2px;padding-top:0px">N/A</div>
<div class="cell y" style="left:860.2px;top:1104.5px"><span class="d"></span><span>68.2</span><span>TH/s</span></div>
<div class="cell g" style="left:921.4px;top:1104.5px"><span>102.2</span><span>TH/s</span></div>
<div class="cell r" style="left:982.5px;top:1104.5px"><span class="d"></span><span>0.0</span><span>TH/s</span></div>
<div class="t" style="left:445.3px;width:40px;text-align:center;top:1187.4px;font-size:14.6px;line-height:14.6px;color:#75757b;font-weight:400;letter-spacing:-0.8px">R7</div>
<div class="cell g" style="left:493.3px;top:1165.7px"><span>101.1</span><span>TH/s</span></div>
<div class="cell y" style="left:554.5px;top:1165.7px"><span class="d"></span><span>67.1</span><span>TH/s</span></div>
<div class="cell g" style="left:615.6px;top:1165.7px"><span>110.3</span><span>TH/s</span></div>
<div class="cell g" style="left:676.8px;top:1165.7px"><span>100.0</span><span>TH/s</span></div>
<div class="cell g" style="left:737.9px;top:1165.7px"><span>100.2</span><span>TH/s</span></div>
<div class="cell g" style="left:799.0px;top:1165.7px"><span>97.3</span><span>TH/s</span></div>
<div class="cell g" style="left:860.2px;top:1165.7px"><span>99.7</span><span>TH/s</span></div>
<div class="cell g" style="left:921.4px;top:1165.7px"><span>103.5</span><span>TH/s</span></div>
<div class="cell g" style="left:982.5px;top:1165.7px"><span>93.1</span><span>TH/s</span></div>
<div class="b" style="left:1077.2px;top:642.3px;width:643.0px;height:617.7px;background:#232428;border:1.5px solid #2c2d31;border-radius:14px;"></div>
<svg class="b" style="left:1107.7px;top:695.0px" width="20.2" height="20.2" viewBox="-1 -1 20.2 20.2"><g fill="none" stroke="#8a8a90" stroke-width="1.75"><rect x="0.5" y="0.5" width="7.10" height="7.10" rx="1"/><rect x="10.60" y="0.5" width="7.10" height="7.10" rx="1"/><rect x="0.5" y="10.60" width="7.10" height="7.10" rx="1"/><rect x="10.60" y="10.60" width="7.10" height="7.10" rx="1"/></g></svg>
<div class="t" style="left:1136.2px;top:694.4px;font-size:22.6px;line-height:22.6px;color:#ececec;font-weight:400;letter-spacing:-0.85px;">Rack 1.2</div>
<div class="b" style="left:1229.5px;top:682.5px;width:69.7px;height:44.0px;background:#19191a;border:1.5px solid #2e2e31;border-radius:10px;"></div>
<div class="t" style="left:1064.3px;width:400px;text-align:center;top:692.6px;font-size:23.5px;line-height:23.5px;color:#f0f0f0;font-weight:400;letter-spacing:0px">7×9</div>
<div class="b" style="left:1617.2px;top:672.0px;width:73.5px;height:64.6px;background:#333335;border-radius:12px;box-shadow:0 4px 10px rgba(0,0,0,0.35)"></div>
<svg class="b" style="left:1641.0px;top:691.3px" width="26" height="26" viewBox="0 0 24 24"><g fill="none" stroke="#f0f0f0" stroke-width="2" stroke-linecap="round" stroke-linejoin="round"><path d="M12.22 2h-.44a2 2 0 0 0-2 2v.18a2 2 0 0 1-1 1.73l-.43.25a2 2 0 0 1-2 0l-.15-.08a2 2 0 0 0-2.73.73l-.22.38a2 2 0 0 0 .73 2.73l.15.1a2 2 0 0 1 1 1.72v.51a2 2 0 0 1-1 1.74l-.15.09a2 2 0 0 0-.73 2.73l.22.38a2 2 0 0 0 2.73.73l.15-.08a2 2 0 0 1 2 0l.43.25a2 2 0 0 1 1 1.73V20a2 2 0 0 0 2 2h.44a2 2 0 0 0 2-2v-.18a2 2 0 0 1 1-1.73l.43-.25a2 2 0 0 1 2 0l.15.08a2 2 0 0 0 2.73-.73l.22-.39a2 2 0 0 0-.73-2.73l-.15-.08a2 2 0 0 1-1-1.74v-.5a2 2 0 0 1 1-1.74l.15-.09a2 2 0 0 0 .73-2.73l-.22-.38a2 2 0 0 0-2.73-.73l-.15.08a2 2 0 0 1-2 0l-.43-.25a2 2 0 0 1-1-1.73V4a2 2 0 0 0-2-2z"/><circle cx="12" cy="12" r="3"/></g></svg>
<div class="t" style="left:1142.7px;width:60px;text-align:center;top:758.3px;font-size:15px;line-height:15px;color:#75757b;font-weight:400;letter-spacing:0px">C1</div>
<div class="t" style="left:1203.8px;width:60px;text-align:center;top:758.3px;font-size:15px;line-height:15px;color:#75757b;font-weight:400;letter-spacing:0px">C2</div>
<div class="t" style="left:1264.9px;width:60px;text-align:center;top:758.3px;font-size:15px;line-height:15px;color:#75757b;font-weight:400;letter-spacing:0px">C3</div>
<div class="t" style="left:1326.0px;width:60px;text-align:center;top:758.3px;font-size:15px;line-height:15px;color:#75757b;font-weight:400;letter-spacing:0px">C4</div>
<div class="t" style="left:1387.1px;width:60px;text-align:center;top:758.3px;font-size:15px;line-height:15px;color:#75757b;font-weight:400;letter-spacing:0px">C5</div>
<div class="t" style="left:1448.2px;width:60px;text-align:center;top:758.3px;font-size:15px;line-height:15px;color:#75757b;font-weight:400;letter-spacing:0px">C6</div>
<div class="t" style="left:1509.3px;width:60px;text-align:center;top:758.3px;font-size:15px;line-height:15px;color:#75757b;font-weight:400;letter-spacing:0px">C7</div>
<div class="t" style="left:1570.4px;width:60px;text-align:center;top:758.3px;font-size:15px;line-height:15px;color:#75757b;font-weight:400;letter-spacing:0px">C8</div>
<div class="t" style="left:1631.5px;width:60px;text-align:center;top:758.3px;font-size:15px;line-height:15px;color:#75757b;font-weight:400;letter-spacing:0px">C9</div>
<div class="t" style="left:1096.2px;width:40px;text-align:center;top:819.9px;font-size:14.6px;line-height:14.6px;color:#75757b;font-weight:400;letter-spacing:-0.8px">R1</div>
<div class="cell o" style="left:1144.2px;top:798.2px"><span class="d"></span><span>35.1</span><span>TH/s</span></div>
<div class="cell g" style="left:1205.4px;top:798.2px"><span>98.6</span><span>TH/s</span></div>
<div class="cell o" style="left:1266.5px;top:798.2px"><span class="d"></span><span>34.5</span><span>TH/s</span></div>
<div class="cell em" style="left:1327.7px;top:798.2px;font-size:14.6px;padding-top:0px">Empty</div>
<div class="cell y" style="left:1388.8px;top:798.2px"><span>59.9</span><span>TH/s</span></div>
<div class="cell g2" style="left:1450.0px;top:798.2px"><span>77.8</span><span>TH/s</span></div>
<div class="cell y" style="left:1511.1px;top:798.2px"><span>64.5</span><span>TH/s</span></div>
<div class="cell r" style="left:1572.2px;top:798.2px"><span class="d"></span><span>0.0</span><span>TH/s</span></div>
<div class="cell g2" style="left:1633.4px;top:798.2px"><span>82.4</span><span>TH/s</span></div>
<div class="t" style="left:1096.2px;width:40px;text-align:center;top:881.2px;font-size:14.6px;line-height:14.6px;color:#75757b;font-weight:400;letter-spacing:-0.8px">R2</div>
<div class="cell r" style="left:1144.2px;top:859.5px"><span class="d"></span><span>0.0</span><span>TH/s</span></div>
<div class="cell r" style="left:1205.4px;top:859.5px"><span>20.5</span><span>TH/s</span></div>
<div class="cell r" style="left:1266.5px;top:859.5px"><span class="d"></span><span>0.0</span><span>TH/s</span></div>
<div class="cell g" style="left:1327.7px;top:859.5px"><span>99.2</span><span>TH/s</span></div>
<div class="cell g" style="left:1388.8px;top:859.5px"><span>90.8</span><span>TH/s</span></div>
<div class="cell g" style="left:1450.0px;top:859.5px"><span>97.6</span><span>TH/s</span></div>
<div class="cell o" style="left:1511.1px;top:859.5px"><span class="d"></span><span>31.9</span><span>TH/s</span></div>
<div class="cell g" style="left:1572.2px;top:859.5px"><span>96.6</span><span>TH/s</span></div>
<div class="cell g" style="left:1633.4px;top:859.5px"><span>102.4</span><span>TH/s</span></div>
<div class="t" style="left:1096.2px;width:40px;text-align:center;top:942.4px;font-size:14.6px;line-height:14.6px;color:#75757b;font-weight:400;letter-spacing:-0.8px">R3</div>
<div class="cell o" style="left:1144.2px;top:920.7px"><span class="d"></span><span>32.9</span><span>TH/s</span></div>
<div class="cell y" style="left:1205.4px;top:920.7px"><span class="d"></span><span>64.6</span><span>TH/s</span></div>
<div class="cell y" style="left:1266.5px;top:920.7px"><span class="d"></span><span>60.6</span><span>TH/s</span></div>
<div class="cell g2" style="left:1327.7px;top:920.7px"><span>82.3</span><span>TH/s</span></div>
<div class="cell g" style="left:1388.8px;top:920.7px"><span>105.7</span><span>TH/s</span></div>
<div class="cell g" style="left:1450.0px;top:920.7px"><span>107.1</span><span>TH/s</span></div>
<div class="cell g" style="left:1511.1px;top:920.7px"><span>108.8</span><span>TH/s</span></div>
<div class="cell g" style="left:1572.2px;top:920.7px"><span>109.4</span><span>TH/s</span></div>
<div class="cell g" style="left:1633.4px;top:920.7px"><span>95.4</span><span>TH/s</span></div>
<div class="t" style="left:1096.2px;width:40px;text-align:center;top:1003.7px;font-size:14.6px;line-height:14.6px;color:#75757b;font-weight:400;letter-spacing:-0.8px">R4</div>
<div class="cell em" style="left:1144.2px;top:982.0px;font-size:14.6px;padding-top:0px">Empty</div>
<div class="cell y" style="left:1205.4px;top:982.0px"><span>62.9</span><span>TH/s</span></div>
<div class="cell g" style="left:1266.5px;top:982.0px"><span>112.1</span><span>TH/s</span></div>
<div class="cell g" style="left:1327.7px;top:982.0px"><span>94.8</span><span>TH/s</span></div>
<div class="cell g" style="left:1388.8px;top:982.0px"><span>105.9</span><span>TH/s</span></div>
<div class="cell g" style="left:1450.0px;top:982.0px"><span>104.0</span><span>TH/s</span></div>
<div class="cell g" style="left:1511.1px;top:982.0px"><span>113.6</span><span>TH/s</span></div>
<div class="cell r" style="left:1572.2px;top:982.0px"><span class="d"></span><span>0.0</span><span>TH/s</span></div>
<div class="cell g" style="left:1633.4px;top:982.0px"><span>98.3</span><span>TH/s</span></div>
<div class="t" style="left:1096.2px;width:40px;text-align:center;top:1064.9px;font-size:14.6px;line-height:14.6px;color:#75757b;font-weight:400;letter-spacing:-0.8px">R5</div>
<div class="cell g" style="left:1144.2px;top:1043.2px"><span>96.2</span><span>TH/s</span></div>
<div class="cell g2" style="left:1205.4px;top:1043.2px"><span class="d"></span><span>75.7</span><span>TH/s</span></div>
<div class="cell g" style="left:1266.5px;top:1043.2px"><span>91.6</span><span>TH/s</span></div>
<div class="cell g" style="left:1327.7px;top:1043.2px"><span>107.3</span><span>TH/s</span></div>
<div class="cell g" style="left:1388.8px;top:1043.2px"><span>113.8</span><span>TH/s</span></div>
<div class="cell y" style="left:1450.0px;top:1043.2px"><span>71.2</span><span>TH/s</span></div>
<div class="cell o" style="left:1511.1px;top:1043.2px"><span class="d"></span><span>32.6</span><span>TH/s</span></div>
<div class="cell g" style="left:1572.2px;top:1043.2px"><span>98.6</span><span>TH/s</span></div>
<div class="cell y" style="left:1633.4px;top:1043.2px"><span>71.4</span><span>TH/s</span></div>
<div class="t" style="left:1096.2px;width:40px;text-align:center;top:1126.2px;font-size:14.6px;line-height:14.6px;color:#75757b;font-weight:400;letter-spacing:-0.8px">R6</div>
<div class="cell g" style="left:1144.2px;top:1104.5px"><span>106.7</span><span>TH/s</span></div>
<div class="cell g" style="left:1205.4px;top:1104.5px"><span>99.5</span><span>TH/s</span></div>
<div class="cell g" style="left:1266.5px;top:1104.5px"><span>96.3</span><span>TH/s</span></div>
<div class="cell r" style="left:1327.7px;top:1104.5px"><span class="d"></span><span>0.0</span><span>TH/s</span></div>
<div class="cell em" style="left:1388.8px;top:1104.5px;font-size:14.6px;padding-top:0px">Empty</div>
<div class="cell g" style="left:1450.0px;top:1104.5px"><span>107.7</span><span>TH/s</span></div>
<div class="cell g" style="left:1511.1px;top:1104.5px"><span>109.5</span><span>TH/s</span></div>
<div class="cell g" style="left:1572.2px;top:1104.5px"><span>104.9</span><span>TH/s</span></div>
<div class="cell g" style="left:1633.4px;top:1104.5px"><span>104.9</span><span>TH/s</span></div>
<div class="t" style="left:1096.2px;width:40px;text-align:center;top:1187.4px;font-size:14.6px;line-height:14.6px;color:#75757b;font-weight:400;letter-spacing:-0.8px">R7</div>
<div class="cell g" style="left:1144.2px;top:1165.7px"><span>111.7</span><span>TH/s</span></div>
<div class="cell o" style="left:1205.4px;top:1165.7px"><span class="d"></span><span>35.6</span><span>TH/s</span></div>
<div class="cell g" style="left:1266.5px;top:1165.7px"><span>100.5</span><span>TH/s</span></div>
<div class="cell g" style="left:1327.7px;top:1165.7px"><span>102.6</span><span>TH/s</span></div>
<div class="cell g" style="left:1388.8px;top:1165.7px"><span>106.4</span><span>TH/s</span></div>
<div class="cell g2" style="left:1450.0px;top:1165.7px"><span>87.5</span><span>TH/s</span></div>
<div class="cell g" style="left:1511.1px;top:1165.7px"><span>98.1</span><span>TH/s</span></div>
<div class="cell g" style="left:1572.2px;top:1165.7px"><span>100.2</span><span>TH/s</span></div>
<div class="cell g" style="left:1633.4px;top:1165.7px"><span>105.8</span><span>TH/s</span></div>
<div class="b" style="left:1727.3px;top:642.3px;width:643.0px;height:617.7px;background:#232428;border:1.5px solid #2c2d31;border-radius:14px;"></div>
<svg class="b" style="left:1757.8px;top:695.0px" width="20.2" height="20.2" viewBox="-1 -1 20.2 20.2"><g fill="none" stroke="#8a8a90" stroke-width="1.75"><rect x="0.5" y="0.5" width="7.10" height="7.10" rx="1"/><rect x="10.60" y="0.5" width="7.10" height="7.10" rx="1"/><rect x="0.5" y="10.60" width="7.10" height="7.10" rx="1"/><rect x="10.60" y="10.60" width="7.10" height="7.10" rx="1"/></g></svg>
<div class="t" style="left:1786.3px;top:694.4px;font-size:22.6px;line-height:22.6px;color:#ececec;font-weight:400;letter-spacing:-0.85px;">Rack 1.3</div>
<div class="b" style="left:1879.6px;top:682.5px;width:69.7px;height:44.0px;background:#19191a;border:1.5px solid #2e2e31;border-radius:10px;"></div>
<div class="t" style="left:1714.4px;width:400px;text-align:center;top:692.6px;font-size:23.5px;line-height:23.5px;color:#f0f0f0;font-weight:400;letter-spacing:0px">7×9</div>
<div class="b" style="left:2267.3px;top:672.0px;width:73.5px;height:64.6px;background:#333335;border-radius:12px;box-shadow:0 4px 10px rgba(0,0,0,0.35)"></div>
<svg class="b" style="left:2291.1px;top:691.3px" width="26" height="26" viewBox="0 0 24 24"><g fill="none" stroke="#f0f0f0" stroke-width="2" stroke-linecap="round" stroke-linejoin="round"><path d="M12.22 2h-.44a2 2 0 0 0-2 2v.18a2 2 0 0 1-1 1.73l-.43.25a2 2 0 0 1-2 0l-.15-.08a2 2 0 0 0-2.73.73l-.22.38a2 2 0 0 0 .73 2.73l.15.1a2 2 0 0 1 1 1.72v.51a2 2 0 0 1-1 1.74l-.15.09a2 2 0 0 0-.73 2.73l.22.38a2 2 0 0 0 2.73.73l.15-.08a2 2 0 0 1 2 0l.43.25a2 2 0 0 1 1 1.73V20a2 2 0 0 0 2 2h.44a2 2 0 0 0 2-2v-.18a2 2 0 0 1 1-1.73l.43-.25a2 2 0 0 1 2 0l.15.08a2 2 0 0 0 2.73-.73l.22-.39a2 2 0 0 0-.73-2.73l-.15-.08a2 2 0 0 1-1-1.74v-.5a2 2 0 0 1 1-1.74l.15-.09a2 2 0 0 0 .73-2.73l-.22-.38a2 2 0 0 0-2.73-.73l-.15.08a2 2 0 0 1-2 0l-.43-.25a2 2 0 0 1-1-1.73V4a2 2 0 0 0-2-2z"/><circle cx="12" cy="12" r="3"/></g></svg>
<div class="t" style="left:1792.8px;width:60px;text-align:center;top:758.3px;font-size:15px;line-height:15px;color:#75757b;font-weight:400;letter-spacing:0px">C1</div>
<div class="t" style="left:1853.9px;width:60px;text-align:center;top:758.3px;font-size:15px;line-height:15px;color:#75757b;font-weight:400;letter-spacing:0px">C2</div>
<div class="t" style="left:1915.0px;width:60px;text-align:center;top:758.3px;font-size:15px;line-height:15px;color:#75757b;font-weight:400;letter-spacing:0px">C3</div>
<div class="t" style="left:1976.1px;width:60px;text-align:center;top:758.3px;font-size:15px;line-height:15px;color:#75757b;font-weight:400;letter-spacing:0px">C4</div>
<div class="t" style="left:2037.2px;width:60px;text-align:center;top:758.3px;font-size:15px;line-height:15px;color:#75757b;font-weight:400;letter-spacing:0px">C5</div>
<div class="t" style="left:2098.3px;width:60px;text-align:center;top:758.3px;font-size:15px;line-height:15px;color:#75757b;font-weight:400;letter-spacing:0px">C6</div>
<div class="t" style="left:2159.4px;width:60px;text-align:center;top:758.3px;font-size:15px;line-height:15px;color:#75757b;font-weight:400;letter-spacing:0px">C7</div>
<div class="t" style="left:2220.5px;width:60px;text-align:center;top:758.3px;font-size:15px;line-height:15px;color:#75757b;font-weight:400;letter-spacing:0px">C8</div>
<div class="t" style="left:2281.6px;width:60px;text-align:center;top:758.3px;font-size:15px;line-height:15px;color:#75757b;font-weight:400;letter-spacing:0px">C9</div>
<div class="t" style="left:1746.3px;width:40px;text-align:center;top:819.9px;font-size:14.6px;line-height:14.6px;color:#75757b;font-weight:400;letter-spacing:-0.8px">R1</div>
<div class="cell g2" style="left:1794.3px;top:798.2px"><span>84.0</span><span>TH/s</span></div>
<div class="cell g" style="left:1855.5px;top:798.2px"><span>101.4</span><span>TH/s</span></div>
<div class="cell y" style="left:1916.6px;top:798.2px"><span class="d"></span><span>64.8</span><span>TH/s</span></div>
<div class="cell g" style="left:1977.8px;top:798.2px"><span>97.8</span><span>TH/s</span></div>
<div class="cell o" style="left:2038.9px;top:798.2px"><span class="d"></span><span>35.0</span><span>TH/s</span></div>
<div class="cell g" style="left:2100.1px;top:798.2px"><span>101.1</span><span>TH/s</span></div>
<div class="cell em" style="left:2161.2px;top:798.2px;font-size:14.6px;padding-top:0px">Empty</div>
<div class="cell r" style="left:2222.3px;top:798.2px"><span class="d"></span><span>0.0</span><span>TH/s</span></div>
<div class="cell g" style="left:2283.5px;top:798.2px"><span>109.6</span><span>TH/s</span></div>
<div class="t" style="left:1746.3px;width:40px;text-align:center;top:881.2px;font-size:14.6px;line-height:14.6px;color:#75757b;font-weight:400;letter-spacing:-0.8px">R2</div>
<div class="cell o" style="left:1794.3px;top:859.5px"><span class="d"></span><span>34.5</span><span>TH/s</span></div>
<div class="cell g" style="left:1855.5px;top:859.5px"><span>92.9</span><span>TH/s</span></div>
<div class="cell g" style="left:1916.6px;top:859.5px"><span>96.1</span><span>TH/s</span></div>
<div class="cell g" style="left:1977.8px;top:859.5px"><span>89.6</span><span>TH/s</span></div>
<div class="cell y" style="left:2038.9px;top:859.5px"><span class="d"></span><span>72.8</span><span>TH/s</span></div>
<div class="cell r" style="left:2100.1px;top:859.5px"><span class="d"></span><span>0.0</span><span>TH/s</span></div>
<div class="cell r" style="left:2161.2px;top:859.5px"><span class="d"></span><span>0.0</span><span>TH/s</span></div>
<div class="cell o" style="left:2222.3px;top:859.5px"><span class="d"></span><span>31.9</span><span>TH/s</span></div>
<div class="cell g" style="left:2283.5px;top:859.5px"><span>97.9</span><span>TH/s</span></div>
<div class="t" style="left:1746.3px;width:40px;text-align:center;top:942.4px;font-size:14.6px;line-height:14.6px;color:#75757b;font-weight:400;letter-spacing:-0.8px">R3</div>
<div class="cell o" style="left:1794.3px;top:920.7px"><span class="d"></span><span>38.2</span><span>TH/s</span></div>
<div class="cell em" style="left:1855.5px;top:920.7px;font-size:14.6px;padding-top:0px">Empty</div>
<div class="cell r" style="left:1916.6px;top:920.7px"><span class="d"></span><span>0.0</span><span>TH/s</span></div>
<div class="cell em" style="left:1977.8px;top:920.7px;font-size:14.6px;padding-top:0px">Empty</div>
<div class="cell g" style="left:2038.9px;top:920.7px"><span>102.8</span><span>TH/s</span></div>
<div class="cell g" style="left:2100.1px;top:920.7px"><span>99.5</span><span>TH/s</span></div>
<div class="cell g" style="left:2161.2px;top:920.7px"><span>111.7</span><span>TH/s</span></div>
<div class="cell r" style="left:2222.3px;top:920.7px"><span class="d"></span><span>0.0</span><span>TH/s</span></div>
<div class="cell g" style="left:2283.5px;top:920.7px"><span>97.4</span><span>TH/s</span></div>
<div class="t" style="left:1746.3px;width:40px;text-align:center;top:1003.7px;font-size:14.6px;line-height:14.6px;color:#75757b;font-weight:400;letter-spacing:-0.8px">R4</div>
<div class="cell g" style="left:1794.3px;top:982.0px"><span>104.9</span><span>TH/s</span></div>
<div class="cell g" style="left:1855.5px;top:982.0px"><span>108.9</span><span>TH/s</span></div>
<div class="cell o" style="left:1916.6px;top:982.0px"><span class="d"></span><span>37.0</span><span>TH/s</span></div>
<div class="cell y" style="left:1977.8px;top:982.0px"><span class="d"></span><span>58.7</span><span>TH/s</span></div>
<div class="cell g" style="left:2038.9px;top:982.0px"><span>108.8</span><span>TH/s</span></div>
<div class="cell g2" style="left:2100.1px;top:982.0px"><span>75.8</span><span>TH/s</span></div>
<div class="cell g" style="left:2161.2px;top:982.0px"><span>102.8</span><span>TH/s</span></div>
<div class="cell g" style="left:2222.3px;top:982.0px"><span>98.3</span><span>TH/s</span></div>
<div class="cell g" style="left:2283.5px;top:982.0px"><span>107.7</span><span>TH/s</span></div>
<div class="t" style="left:1746.3px;width:40px;text-align:center;top:1064.9px;font-size:14.6px;line-height:14.6px;color:#75757b;font-weight:400;letter-spacing:-0.8px">R5</div>
<div class="cell r" style="left:1794.3px;top:1043.2px"><span class="d"></span><span>0.0</span><span>TH/s</span></div>
<div class="cell o" style="left:1855.5px;top:1043.2px"><span class="d"></span><span>39.1</span><span>TH/s</span></div>
<div class="cell y" style="left:1916.6px;top:1043.2px"><span class="d"></span><span>68.7</span><span>TH/s</span></div>
<div class="cell g" style="left:1977.8px;top:1043.2px"><span>114.1</span><span>TH/s</span></div>
<div class="cell em" style="left:2038.9px;top:1043.2px;font-size:14.6px;padding-top:0px">Empty</div>
<div class="cell o" style="left:2100.1px;top:1043.2px"><span>36.6</span><span>TH/s</span></div>
<div class="cell g" style="left:2161.2px;top:1043.2px"><span>102.2</span><span>TH/s</span></div>
<div class="cell g" style="left:2222.3px;top:1043.2px"><span>108.5</span><span>TH/s</span></div>
<div class="cell o" style="left:2283.5px;top:1043.2px"><span class="d"></span><span>36.8</span><span>TH/s</span></div>
<div class="t" style="left:1746.3px;width:40px;text-align:center;top:1126.2px;font-size:14.6px;line-height:14.6px;color:#75757b;font-weight:400;letter-spacing:-0.8px">R6</div>
<div class="cell y" style="left:1794.3px;top:1104.5px"><span class="d"></span><span>71.3</span><span>TH/s</span></div>
<div class="cell g" style="left:1855.5px;top:1104.5px"><span>100.8</span><span>TH/s</span></div>
<div class="cell g" style="left:1916.6px;top:1104.5px"><span>90.8</span><span>TH/s</span></div>
<div class="cell na" style="left:1977.8px;top:1104.5px;font-size:15.2px;padding-top:0px">N/A</div>
<div class="cell g" style="left:2038.9px;top:1104.5px"><span>107.9</span><span>TH/s</span></div>
<div class="cell o" style="left:2100.1px;top:1104.5px"><span class="d"></span><span>39.7</span><span>TH/s</span></div>
<div class="cell g" style="left:2161.2px;top:1104.5px"><span>109.0</span><span>TH/s</span></div>
<div class="cell g" style="left:2222.3px;top:1104.5px"><span>107.5</span><span>TH/s</span></div>
<div class="cell em" style="left:2283.5px;top:1104.5px;font-size:14.6px;padding-top:0px">Empty</div>
<div class="t" style="left:1746.3px;width:40px;text-align:center;top:1187.4px;font-size:14.6px;line-height:14.6px;color:#75757b;font-weight:400;letter-spacing:-0.8px">R7</div>
<div class="cell g" style="left:1794.3px;top:1165.7px"><span>106.4</span><span>TH/s</span></div>
<div class="cell g" style="left:1855.5px;top:1165.7px"><span>102.4</span><span>TH/s</span></div>
<div class="cell g" style="left:1916.6px;top:1165.7px"><span>98.5</span><span>TH/s</span></div>
<div class="cell g" style="left:1977.8px;top:1165.7px"><span>109.8</span><span>TH/s</span></div>
<div class="cell em" style="left:2038.9px;top:1165.7px;font-size:14.6px;padding-top:0px">Empty</div>
<div class="cell g" style="left:2100.1px;top:1165.7px"><span>104.6</span><span>TH/s</span></div>
<div class="cell y" style="left:2161.2px;top:1165.7px"><span class="d"></span><span>65.1</span><span>TH/s</span></div>
<div class="cell g" style="left:2222.3px;top:1165.7px"><span>108.1</span><span>TH/s</span></div>
<div class="cell o" style="left:2283.5px;top:1165.7px"><span class="d"></span><span>40.9</span><span>TH/s</span></div>
<div class="b" style="left:2408.8px;top:519.0px;width:491.2px;height:227.3px;background:#212122;border:1.5px solid #2a2a2c;border-radius:14px;"></div>
<svg class="b" style="left:2445.1px;top:569.8px" width="22.5" height="22.5" viewBox="0 0 24 24"><path d="m6 14 1.5-2.9A2 2 0 0 1 9.24 10H20a2 2 0 0 1 1.94 2.5l-1.54 6a2 2 0 0 1-1.95 1.5H4a2 2 0 0 1-2-2V5a2 2 0 0 1 2-2h3.9a2 2 0 0 1 1.69.9l.81 1.2a2 2 0 0 0 1.67.9H18a2 2 0 0 1 2 2v2" fill="none" stroke="#8a8a90" stroke-width="1.9" stroke-linecap="round" stroke-linejoin="round"/></svg>
<div class="t" style="left:2488.4px;top:568.6px;font-size:29.2px;line-height:29.2px;color:#ececec;font-weight:400;letter-spacing:0.55px;">Container 2</div>
<div class="b" style="left:2661.0px;top:559.0px;width:111.8px;height:44.7px;background:transparent;border:1.5px solid #38383b;border-radius:10px;"></div>
<div class="t" style="left:2677.0px;top:570.7px;font-size:22.2px;line-height:22.2px;color:#ececec;font-weight:400;letter-spacing:0px;">3 Racks</div>
<div class="b" style="left:2438.0px;top:642.0px;width:243.0px;height:75.5px;background:#232428;border:1.5px solid #2c2d31;border-radius:14px;"></div>
<svg class="b" style="left:2468.5px;top:670.5px" width="19.2" height="19.2" viewBox="-1 -1 19.2 19.2"><g fill="none" stroke="#ececec" stroke-width="1.75"><rect x="0.5" y="0.5" width="6.60" height="6.60" rx="1"/><rect x="10.10" y="0.5" width="6.60" height="6.60" rx="1"/><rect x="0.5" y="10.10" width="6.60" height="6.60" rx="1"/><rect x="10.10" y="10.10" width="6.60" height="6.60" rx="1"/></g></svg>
<div class="t" style="left:2496.6px;top:669.4px;font-size:22.6px;line-height:22.6px;color:#ececec;font-weight:400;letter-spacing:-0.85px;">Rack 2.1</div>
<div class="b" style="left:2688.0px;top:642.0px;width:262.0px;height:75.5px;background:#232428;border:1.5px solid #2c2d31;border-radius:14px;"></div>
<svg class="b" style="left:2718.5px;top:670.5px" width="19.2" height="19.2" viewBox="-1 -1 19.2 19.2"><g fill="none" stroke="#ececec" stroke-width="1.75"><rect x="0.5" y="0.5" width="6.60" height="6.60" rx="1"/><rect x="10.10" y="0.5" width="6.60" height="6.60" rx="1"/><rect x="0.5" y="10.10" width="6.60" height="6.60" rx="1"/><rect x="10.10" y="10.10" width="6.60" height="6.60" rx="1"/></g></svg>
<div class="t" style="left:2746.6px;top:669.4px;font-size:22.6px;line-height:22.6px;color:#ececec;font-weight:400;letter-spacing:-0.3px;">Rack 2.2</div>
<div class="b" style="left:396.0px;top:1297.0px;width:2004.7px;height:227.3px;background:#212122;border:1.5px solid #2a2a2c;border-radius:14px;"></div>
<svg class="b" style="left:432.3px;top:1347.8px" width="22.5" height="22.5" viewBox="0 0 24 24"><path d="m6 14 1.5-2.9A2 2 0 0 1 9.24 10H20a2 2 0 0 1 1.94 2.5l-1.54 6a2 2 0 0 1-1.95 1.5H4a2 2 0 0 1-2-2V5a2 2 0 0 1 2-2h3.9a2 2 0 0 1 1.69.9l.81 1.2a2 2 0 0 0 1.67.9H18a2 2 0 0 1 2 2v2" fill="none" stroke="#8a8a90" stroke-width="1.9" stroke-linecap="round" stroke-linejoin="round"/></svg>
<div class="t" style="left:477.0px;top:1346.6px;font-size:29.2px;line-height:29.2px;color:#ececec;font-weight:400;letter-spacing:0.55px;">Container 3</div>
<div class="b" style="left:649.0px;top:1336.3px;width:112.5px;height:45.3px;background:transparent;border:1.5px solid #38383b;border-radius:10px;"></div>
<div class="t" style="left:665.0px;top:1348.0px;font-size:22.2px;line-height:22.2px;color:#ececec;font-weight:400;letter-spacing:0px;">3 Racks</div>
<div class="b" style="left:2208.0px;top:1327.0px;width:73.6px;height:64.0px;background:#333335;border-radius:12px;box-shadow:0 4px 10px rgba(0,0,0,0.35)"></div>
<svg class="b" style="left:2231.8px;top:1346.0px" width="26" height="26" viewBox="0 0 24 24"><g fill="none" stroke="#f0f0f0" stroke-width="2" stroke-linecap="round" stroke-linejoin="round"><path d="M12.22 2h-.44a2 2 0 0 0-2 2v.18a2 2 0 0 1-1 1.73l-.43.25a2 2 0 0 1-2 0l-.15-.08a2 2 0 0 0-2.73.73l-.22.38a2 2 0 0 0 .73 2.73l.15.1a2 2 0 0 1 1 1.72v.51a2 2 0 0 1-1 1.74l-.15.09a2 2 0 0 0-.73 2.73l.22.38a2 2 0 0 0 2.73.73l.15-.08a2 2 0 0 1 2 0l.43.25a2 2 0 0 1 1 1.73V20a2 2 0 0 0 2 2h.44a2 2 0 0 0 2-2v-.18a2 2 0 0 1 1-1.73l.43-.25a2 2 0 0 1 2 0l.15.08a2 2 0 0 0 2.73-.73l.22-.39a2 2 0 0 0-.73-2.73l-.15-.08a2 2 0 0 1-1-1.74v-.5a2 2 0 0 1 1-1.74l.15-.09a2 2 0 0 0 .73-2.73l-.22-.38a2 2 0 0 0-2.73-.73l-.15.08a2 2 0 0 1-2 0l-.43-.25a2 2 0 0 1-1-1.73V4a2 2 0 0 0-2-2z"/><circle cx="12" cy="12" r="3"/></g></svg>
<div class="b" style="left:2220.0px;top:1337.0px;width:50.0px;height:44.0px;background:#333335;border-radius:0px;"></div>
<svg class="b" style="left:2228.0px;top:1342.0px;" width="34.0" height="34.0" viewBox="2228 1342 34 34"><g fill="none" stroke="#f0f0f0" stroke-width="2.6" stroke-linecap="round" stroke-linejoin="round"><path d="M2234,1370 L2243.5,1360.5 M2234,1362 V1370 H2242"/><path d="M2256,1348 L2246.5,1357.5 M2248,1348 H2256 V1356"/></g></svg>
<div class="b" style="left:2297.0px;top:1327.0px;width:73.8px;height:64.0px;background:#333335;border-radius:12px;box-shadow:0 4px 10px rgba(0,0,0,0.35)"></div>
<svg class="b" style="left:2320.9px;top:1346.0px" width="26" height="26" viewBox="0 0 24 24"><g fill="none" stroke="#f0f0f0" stroke-width="2" stroke-linecap="round" stroke-linejoin="round"><path d="M12.22 2h-.44a2 2 0 0 0-2 2v.18a2 2 0 0 1-1 1.73l-.43.25a2 2 0 0 1-2 0l-.15-.08a2 2 0 0 0-2.73.73l-.22.38a2 2 0 0 0 .73 2.73l.15.1a2 2 0 0 1 1 1.72v.51a2 2 0 0 1-1 1.74l-.15.09a2 2 0 0 0-.73 2.73l.22.38a2 2 0 0 0 2.73.73l.15-.08a2 2 0 0 1 2 0l.43.25a2 2 0 0 1 1 1.73V20a2 2 0 0 0 2 2h.44a2 2 0 0 0 2-2v-.18a2 2 0 0 1 1-1.73l.43-.25a2 2 0 0 1 2 0l.15.08a2 2 0 0 0 2.73-.73l.22-.39a2 2 0 0 0-.73-2.73l-.15-.08a2 2 0 0 1-1-1.74v-.5a2 2 0 0 1 1-1.74l.15-.09a2 2 0 0 0 .73-2.73l-.22-.38a2 2 0 0 0-2.73-.73l-.15.08a2 2 0 0 1-2 0l-.43-.25a2 2 0 0 1-1-1.73V4a2 2 0 0 0-2-2z"/><circle cx="12" cy="12" r="3"/></g></svg>
<div class="b" style="left:426.3px;top:1420.0px;width:242.0px;height:75.5px;background:#232428;border:1.5px solid #2c2d31;border-radius:14px;"></div>
<svg class="b" style="left:456.8px;top:1448.5px" width="19.2" height="19.2" viewBox="-1 -1 19.2 19.2"><g fill="none" stroke="#ececec" stroke-width="1.75"><rect x="0.5" y="0.5" width="6.60" height="6.60" rx="1"/><rect x="10.10" y="0.5" width="6.60" height="6.60" rx="1"/><rect x="0.5" y="10.10" width="6.60" height="6.60" rx="1"/><rect x="10.10" y="10.10" width="6.60" height="6.60" rx="1"/></g></svg>
<div class="t" style="left:485.0px;top:1446.3px;font-size:22.6px;line-height:22.6px;color:#ececec;font-weight:400;letter-spacing:-0.85px;">Rack 3.1</div>
<div class="b" style="left:677.4px;top:1420.0px;width:248.1px;height:75.5px;background:#232428;border:1.5px solid #2c2d31;border-radius:14px;"></div>
<svg class="b" style="left:707.9px;top:1448.5px" width="19.2" height="19.2" viewBox="-1 -1 19.2 19.2"><g fill="none" stroke="#ececec" stroke-width="1.75"><rect x="0.5" y="0.5" width="6.60" height="6.60" rx="1"/><rect x="10.10" y="0.5" width="6.60" height="6.60" rx="1"/><rect x="0.5" y="10.10" width="6.60" height="6.60" rx="1"/><rect x="10.10" y="10.10" width="6.60" height="6.60" rx="1"/></g></svg>
<div class="t" style="left:736.1px;top:1446.3px;font-size:22.6px;line-height:22.6px;color:#ececec;font-weight:400;letter-spacing:-0.3px;">Rack 3.2</div>
<div class="b" style="left:934.2px;top:1420.0px;width:248.1px;height:75.5px;background:#232428;border:1.5px solid #2c2d31;border-radius:14px;"></div>
<svg class="b" style="left:964.7px;top:1448.5px" width="19.2" height="19.2" viewBox="-1 -1 19.2 19.2"><g fill="none" stroke="#ececec" stroke-width="1.75"><rect x="0.5" y="0.5" width="6.60" height="6.60" rx="1"/><rect x="10.10" y="0.5" width="6.60" height="6.60" rx="1"/><rect x="0.5" y="10.10" width="6.60" height="6.60" rx="1"/><rect x="10.10" y="10.10" width="6.60" height="6.60" rx="1"/></g></svg>
<div class="t" style="left:992.9px;top:1446.3px;font-size:22.6px;line-height:22.6px;color:#ececec;font-weight:400;letter-spacing:-0.3px;">Rack 3.3</div>
<div class="b" style="left:2408.3px;top:1297.0px;width:541.7px;height:103.8px;background:#1f1f20;border:1.5px dashed #3a3a3d;border-radius:16px;"></div>
<div class="t" style="left:2784.4px;top:1337.5px;font-size:23px;line-height:23px;color:#8a8a90;font-weight:400;letter-spacing:0px;">Empty</div>
<div class="b" style="left:373.0px;top:1561.0px;width:2093.0px;height:15.0px;background:#222223;border-radius:8px;"></div>
</div></div>
<svg class="b" style="left:1168.0px;top:452.0px;" width="30.0" height="44.0" viewBox="1168 452 30 44"><path d="M1174,458.5 V485.5 L1180.3,480 L1185.5,490.3 L1190,488.3 L1185.2,478.2 L1192.8,477.6 Z" fill="#111" stroke="#fff" stroke-width="2.3" stroke-linejoin="round"/></svg>
</body></html>
